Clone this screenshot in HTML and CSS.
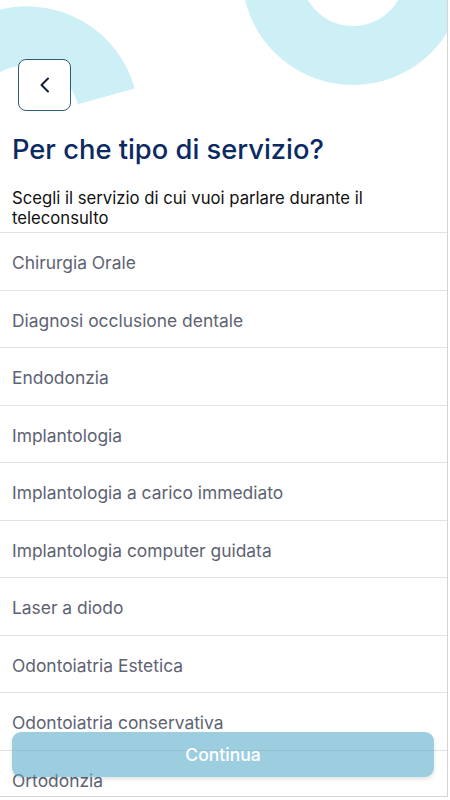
FILE: index.html
```html
<!DOCTYPE html>
<html lang="it">
<head>
    <meta charset="UTF-8">
    <meta name="viewport" content="width=device-width, initial-scale=1.0">
    <title>Teleconsulto - Servizio</title>
    <link rel="stylesheet" href="styles.css">
</head>
<body>

<div class="screen">
    <!-- background shapes -->
    <svg class="deco" width="450" height="140" viewBox="0 0 450 140" aria-hidden="true">
        <path d="M -52.7 140.4 A 82.5 82.5 0 0 1 106.3 96.3" fill="none" stroke="#cdf0f7" stroke-width="59"/>
        <circle cx="353" cy="-26" r="81.5" fill="none" stroke="#cdf0f7" stroke-width="59"/>
    </svg>

    <div class="content">
        <button class="back-button" aria-label="Indietro">
            <svg width="14" height="16" viewBox="0 0 14 16">
                <path d="M10 1.5 L3.5 8 L10 14.5" fill="none" stroke="#0f1f3d" stroke-width="2" stroke-linecap="round" stroke-linejoin="round"/>
            </svg>
        </button>

        <h1 class="title">Per che tipo di servizio?</h1>
        <p class="subtitle">Scegli il servizio di cui vuoi parlare durante il teleconsulto</p>

        <ul class="service-list">
            <li class="service-item">Chirurgia Orale</li>
            <li class="service-item">Diagnosi occlusione dentale</li>
            <li class="service-item">Endodonzia</li>
            <li class="service-item">Implantologia</li>
            <li class="service-item">Implantologia a carico immediato</li>
            <li class="service-item">Implantologia computer guidata</li>
            <li class="service-item">Laser a diodo</li>
            <li class="service-item">Odontoiatria Estetica</li>
            <li class="service-item">Odontoiatria conservativa</li>
            <li class="service-item">Ortodonzia</li>
            <li class="service-item">Parodontologia</li>
            <li class="service-item">Pedodonzia</li>
        </ul>
    </div>

    <button class="continue-button" disabled>Continua</button>
</div>

</body>
</html>
```

FILE: styles.css
```css
body {
    margin: 0;
    background-color: #fff;
    font-family: Inter, "Noto Sans", sans-serif;
}

.screen {
    position: relative;
    width: 447px;
    height: 796px;
    border-right: 1px solid #d4d4d4;
    border-bottom: 1px solid #d4d4d4;
    overflow: hidden;
    background-color: #fff;
}

.deco {
    position: absolute;
    top: 0;
    left: 0;
}

.content {
    position: relative;
    padding-top: 59px;
}

.back-button {
    display: flex;
    align-items: center;
    justify-content: center;
    box-sizing: border-box;
    width: 53px;
    height: 52px;
    margin-left: 18px;
    padding: 0;
    background-color: #fff;
    border: 1.5px solid #2e5d77;
    border-radius: 8px;
    cursor: pointer;
}

.title {
    margin: 22.5px 0 0 12px;
    font-size: 27.3px;
    line-height: 32px;
    font-weight: 500;
    color: #0c2a62;
}

.subtitle {
    margin: 22.5px 12px 4px 12px;
    font-size: 16.7px;
    line-height: 20px;
    color: #111;
}

.service-list {
    list-style: none;
    margin: 0;
    padding: 0;
}

.service-item {
    padding: 20px 12px 16.5px;
    border-top: 1px solid #e2e2e2;
    font-size: 17.4px;
    line-height: 20px;
    color: #5e6372;
}

.continue-button {
    position: absolute;
    left: 12px;
    right: 13px;
    bottom: 19px;
    height: 45px;
    border: none;
    border-radius: 9px;
    background-color: rgba(92, 173, 203, 0.6);
    box-shadow: 0 2px 4px rgba(0, 0, 0, 0.12);
    color: #fff;
    font-family: Inter, "Noto Sans", sans-serif;
    font-size: 17.5px;
    font-weight: 500;
}
```
